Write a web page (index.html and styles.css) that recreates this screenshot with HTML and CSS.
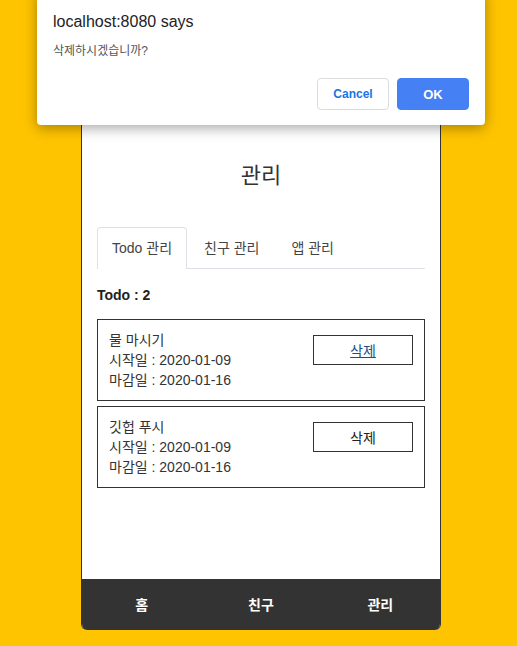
FILE: index.html
```html
<!DOCTYPE html>
<html lang="ko">
<head>
<meta charset="utf-8">
<title>관리</title>
<link rel="stylesheet" href="styles.css">
</head>
<body>
<div class="phone">
  <main class="main">
    <h1 class="title">관리</h1>
    <ul class="tabs">
      <li class="tab active">Todo 관리</li>
      <li class="tab">친구 관리</li>
      <li class="tab">앱 관리</li>
    </ul>
    <div class="count">Todo : 2</div>
    <div class="card">
      <div class="info">
        <div>물 마시기</div>
        <div>시작일 : 2020-01-09</div>
        <div>마감일 : 2020-01-16</div>
      </div>
      <button class="del focus">삭제</button>
    </div>
    <div class="card">
      <div class="info">
        <div>깃헙 푸시</div>
        <div>시작일 : 2020-01-09</div>
        <div>마감일 : 2020-01-16</div>
      </div>
      <button class="del">삭제</button>
    </div>
  </main>
  <nav class="nav">
    <div class="nav-item">홈</div>
    <div class="nav-item">친구</div>
    <div class="nav-item">관리</div>
  </nav>
</div>

<div class="dialog">
  <div class="d-title">localhost:8080 says</div>
  <div class="d-msg">삭제하시겠습니까?</div>
  <div class="d-actions">
    <button class="d-btn cancel">Cancel</button>
    <button class="d-btn ok">OK</button>
  </div>
</div>
</body>
</html>
```

FILE: styles.css
```css
html, body {
  margin: 0;
  padding: 0;
}
body {
  background: #ffc400;
  font-family: "Liberation Sans", "Noto Sans CJK KR", sans-serif;
  color: #333;
  width: 517px;
  height: 646px;
  overflow: hidden;
  position: relative;
}
.phone {
  margin-left: 81px;
  width: 360px;
  height: 630px;
  box-sizing: border-box;
  background: #fff;
  border-left: 1px solid #333;
  border-right: 1px solid #333;
  border-radius: 0 0 6px 6px;
  display: flex;
  flex-direction: column;
  overflow: hidden;
}
.main {
  flex: 1;
  padding: 163px 15px 0;
}
.title {
  margin: 0;
  text-align: center;
  font-size: 22px;
  line-height: 26px;
  font-weight: normal;
  color: #333;
}
.tabs {
  list-style: none;
  margin: 38px 0 0;
  padding: 0;
  display: flex;
  gap: 2px;
  border-bottom: 1px solid #dee2e6;
}
.tab {
  padding: 8px 14px 9px;
  font-size: 14px;
  line-height: 24px;
  color: #444;
  border: 1px solid transparent;
  border-bottom: none;
  border-radius: 4px 4px 0 0;
  margin-bottom: -1px;
}
.tab.active {
  border-color: #dee2e6;
  background: #fff;
}
.count {
  margin-top: 18px;
  font-size: 14px;
  font-weight: bold;
  line-height: 17px;
  color: #222;
}
.card {
  margin-top: 15px;
  border: 1px solid #333;
  padding: 10px 11px;
  display: flex;
  justify-content: space-between;
  align-items: flex-start;
  font-size: 14px;
  line-height: 20px;
}
.card + .card {
  margin-top: 5px;
}
.info {
  color: #333;
}
.del {
  margin-top: 5px;
  width: 100px;
  height: 30px;
  background: #fff;
  border: 1px solid #333;
  font-family: "Liberation Sans", "Noto Sans CJK KR", sans-serif;
  font-size: 14px;
  color: #222;
  padding: 0;
}
.del.focus {
  color: #1d4f85;
  text-decoration: underline;
}
.nav {
  height: 51px;
  background: #333;
  display: grid;
  grid-template-columns: repeat(3, 1fr);
  align-items: center;
}
.nav-item {
  text-align: center;
  color: #fff;
  font-weight: bold;
  font-size: 14px;
  line-height: 20px;
  margin-top: 1px;
}
.dialog {
  position: absolute;
  left: 37px;
  top: -10px;
  width: 448px;
  box-sizing: border-box;
  padding: 22px 16px 15px;
  background: #fff;
  border-radius: 0 0 4px 4px;
  box-shadow: 0 3px 14px rgba(0, 0, 0, 0.35);
}
.d-title {
  font-size: 16px;
  line-height: 20px;
  color: #222;
}
.d-msg {
  margin-top: 11px;
  font-size: 12px;
  line-height: 16px;
  color: #555;
}
.d-actions {
  margin-top: 19px;
  display: flex;
  justify-content: flex-end;
  gap: 8px;
}
.d-btn {
  width: 72px;
  height: 32px;
  border-radius: 4px;
  font-family: "Liberation Sans", sans-serif;
  font-weight: bold;
  font-size: 12px;
  padding: 0;
}
.cancel {
  background: #fff;
  border: 1px solid #dadce0;
  color: #1a73e8;
}
.ok {
  background: #4580f5;
  border: 1px solid #4580f5;
  color: #fff;
  font-size: 13px;
}
```
